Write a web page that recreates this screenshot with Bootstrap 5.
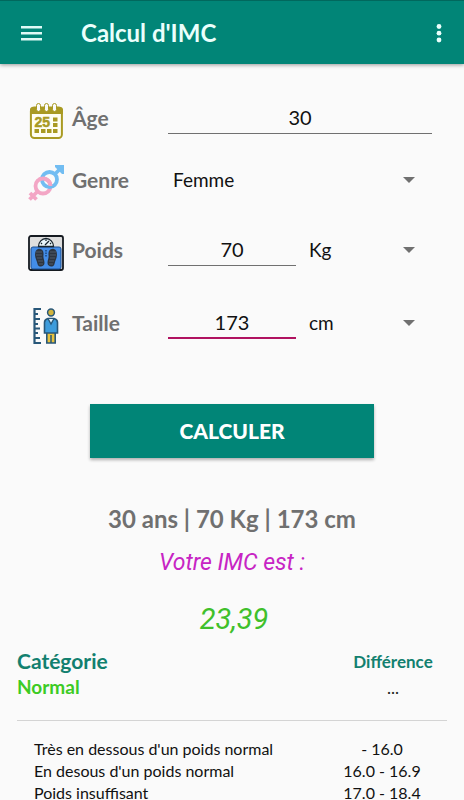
<!DOCTYPE html>
<html lang="fr">
<head>
<meta charset="utf-8">
<meta name="viewport" content="width=device-width, initial-scale=1">
<title>Calcul d'IMC</title>
<link href="https://cdn.jsdelivr.net/npm/bootstrap@5.3.0/dist/css/bootstrap.min.css" rel="stylesheet">
<style>
body { font-family: Lato, "Noto Sans", sans-serif; background: #fafafa; color: #212121; }
.app-bar { background: #018577; height: 64px; padding: 0 16px 0 20px; border-top: 1px solid #01685d; box-shadow: 0 1px 4px rgba(0,0,0,.4); }
.app-title { font-size: 24px; font-weight: 700; line-height: 32px; margin-left: 38px; color: #eafffc; }
.bar-btn { line-height: 0; }
.form-area { padding: 34px 32px 0 28px; }
.line { display: flex; align-items: flex-start; margin-bottom: 32px; }
.line-tight { margin-bottom: 21px; }
.line-mid { margin-bottom: 29px; }
.line-icon { width: 36px; height: 36px; margin: 5px 8px 0 0; flex: none; }
.line-label { width: 96px; flex: none; font-size: 21px; font-weight: 700; line-height: 40px; color: #707070; }
.entry { height: 36px; padding: 3px 0 0; border: 0; border-bottom: 1px solid #707070; border-radius: 0; background: transparent; text-align: center; font-size: 20px; color: #111; min-width: 0; outline: 0; }
.entry-active { border-bottom: 2px solid #b01260; }
.picker { appearance: none; border: 0; border-radius: 0; height: 40px; padding: 0 32px 0 5px; font-size: 19px; color: #111; min-width: 0;
  background: transparent url("data:image/svg+xml,%3Csvg xmlns='http://www.w3.org/2000/svg' viewBox='0 0 12 6'%3E%3Cpath d='M0 0h12L6 6z' fill='%23707070'/%3E%3C/svg%3E") no-repeat right 17px center / 12px 6px; }
.picker-unit { padding-left: 9px; }
.calc-btn { background: #018577; color: #fff; width: 61%; height: 54px; border-radius: 0; font-size: 21px; font-weight: 900; box-shadow: 0 2px 3px rgba(0,0,0,.3); margin-top: 28px; }
.calc-btn:hover { background: #01786b; color: #fff; }
.summary { font-size: 24px; font-weight: 700; line-height: 32px; color: #707070; margin-top: 45px; }
.imc-label { font: italic 400 23px/32px Roboto, sans-serif; color: #c724c4; margin-top: 12px; }
.imc-value { font: italic 400 29px/40px Roboto, sans-serif; color: #3fc02b; margin-top: 20px; padding-left: 4px; }
.result { margin: 9px 17px 0; padding-bottom: 20px; border-bottom: 1px solid #d4d4d4; }
.teal { color: #12806f; }
.head-text { font-size: 21px; font-weight: 700; line-height: 26px; }
.head-value { font-size: 19px; font-weight: 700; line-height: 26px; }
.head-small { font-size: 17px; font-weight: 700; line-height: 26px; }
.green { color: #3ccb24; }
.diff-col { width: 108px; padding-top: 1px; margin-bottom: -1px; }
.ranges { margin: 17px 17px 0; font-size: 16px; line-height: 22px; color: #111; }
.ranges th { padding: 0 0 0 17px; font-weight: 400; }
.ranges td { padding: 0; width: 130px; text-align: center; }
</style>
</head>
<body>
<div class="vh-100 d-flex flex-column overflow-hidden">
<header class="app-bar d-flex align-items-center flex-shrink-0">
  <button class="btn p-0 border-0 bar-btn" type="button" aria-label="Menu">
    <svg width="23" height="18" viewBox="0 0 23 18" fill="#dffaf6"><path d="M1 2h21v2.500H1zM1 8h21v2.500H1zM1 14h21v2.500H1z"/></svg>
  </button>
  <h1 class="app-title mb-0">Calcul d'IMC</h1>
  <button class="btn p-0 border-0 bar-btn ms-auto" type="button" aria-label="Options">
    <svg width="18" height="20" viewBox="0 0 18 20" fill="#eafffc"><circle cx="9" cy="3.500" r="2.400"/><circle cx="9" cy="10.200" r="2.400"/><circle cx="9" cy="17" r="2.400"/></svg>
  </button>
</header>
<main class="flex-shrink-0">
  <form class="form-area">
    <div class="line line-tight">
      <svg class="line-icon" viewBox="0 0 36 36" aria-hidden="true">
        <rect x="2.900" y="4.500" width="31" height="30.500" rx="3.500" fill="#fffef2" stroke="#a99a22" stroke-width="2"/>
        <path d="M2 11V7q0-3 3-3h27q3 0 3 3v4z" fill="#a99a22"/>
        <g fill="#fafafa" stroke="#a99a22"><rect x="8.500" y=".5" width="4" height="8" rx="2"/><rect x="16.500" y=".5" width="4" height="8" rx="2"/><rect x="24.500" y=".5" width="4" height="8" rx="2"/></g>
        <text x="6.500" y="24" font-family="Liberation Sans" font-size="14" font-weight="700" fill="#a99a22" stroke="#a99a22" stroke-width=".5">25</text>
        <path fill="#a99a22" d="M25 14.500h4.500v4H25zM25 20h4.500v4H25zM6.500 26H11v4H6.500zM13 26h4.500v4H13zM19 26h4.500v4H19zM25 26h4.500v4H25z"/>
      </svg>
      <label class="line-label" for="age">Âge</label>
      <input class="entry flex-fill" id="age" type="text" inputmode="numeric" value="30">
    </div>
    <div class="line line-mid">
      <svg class="line-icon" viewBox="0 0 36 36" fill="none" stroke-width="3.800" aria-hidden="true">
        <circle cx="15" cy="21" r="7.500" stroke="#f3a6c5"/><path d="M9.500 26.500L1.500 34.500M2 28l6.500 6.500" stroke="#f3a6c5"/>
        <circle cx="21.500" cy="14.500" r="7.500" stroke="#72bdf2"/><path d="M27 9l5-5" stroke="#72bdf2"/><path d="M27 0h9v9h-2l-7-7z" fill="#72bdf2"/>
        <path d="M11 14.700A7.500 7.500 0 0 1 22.500 21" stroke="#f3a6c5"/>
      </svg>
      <label class="line-label" for="genre">Genre</label>
      <select class="picker flex-fill" id="genre"><option>Femme</option><option>Homme</option></select>
    </div>
    <div class="line">
      <svg class="line-icon" viewBox="0 0 36 36" aria-hidden="true">
        <rect x="1" y="1" width="34" height="34" rx="2" fill="#dedede" stroke="#151a20" stroke-width="1.800"/>
        <rect x="3" y="12" width="30" height="22" rx="2" fill="#438de8" stroke="#1c4f91"/>
        <path d="M10.500 11.500a7.500 8 0 0 1 15 0z" fill="#e9f6fb" stroke="#18242d" stroke-width="1.300"/>
        <path d="M13 8l1 1M18 4.500v1.500M23 8l-1 1M17 10l4-4" stroke="#18242d" stroke-width="1.300"/>
        <path d="M18 15v7" stroke="#245999" stroke-width="2" stroke-dasharray="1.500 1"/>
        <path d="M10 14c4-1 6 2 5.500 6-.5 3 1 5 1 8 0 4-6 5-7 1-.5-3-2.500-6-2.500-9 0-3 1-5.500 3-6zM26 14c-4-1-6 2-5.500 6 .5 3-1 5-1 8 0 4 6 5 7 1 .5-3 2.500-6 2.500-9 0-3-1-5.500-3-6z" fill="#2d3540"/>
        <path d="M8 17h6M8 20h6M9 23h5M10 26h5M11 29h4M28 17h-6M28 20h-6M27 23h-5M26 26h-5M25 29h-4" stroke="#596574" stroke-width=".8"/>
      </svg>
      <label class="line-label" for="poids">Poids</label>
      <div class="row g-0 flex-fill">
        <div class="col-6 d-flex pe-1"><input class="entry w-100" id="poids" type="text" inputmode="numeric" value="70"></div>
        <div class="col-6 d-flex"><select class="picker picker-unit w-100" aria-label="Unité de poids"><option>Kg</option><option>lb</option></select></div>
      </div>
    </div>
    <div class="line">
      <svg class="line-icon" viewBox="0 0 36 36" aria-hidden="true">
        <path d="M13 1H6.500v34H13M6.500 6H10M6.500 11h5.500M6.500 16H10M6.500 20.500h5.500M6.500 25H10M6.500 30h5.500" fill="none" stroke="#285779" stroke-width="2.200"/>
        <circle cx="23" cy="4.500" r="3.400" fill="#d2b43d" stroke="#285779" stroke-width="1.500"/>
        <path d="M18.800 24h8.400v11h-8.400z" fill="#e8c23c" stroke="#285779" stroke-width="1.600"/><path d="M23 27v8" stroke="#285779" stroke-width="1.500"/>
        <path d="M20 10.500h6q3.500 1 3.500 4V25h-13V14.500q0-3 3.500-4z" fill="#3d9cdc" stroke="#285779" stroke-width="1.600"/>
        <path d="M20.200 11l2.800 5 2.800-5" fill="#e4f3fb" stroke="#285779" stroke-width="1.400"/>
      </svg>
      <label class="line-label" for="taille">Taille</label>
      <div class="row g-0 flex-fill">
        <div class="col-6 d-flex pe-1"><input class="entry entry-active w-100" id="taille" type="text" inputmode="numeric" value="173"></div>
        <div class="col-6 d-flex"><select class="picker picker-unit w-100" aria-label="Unité de taille"><option>cm</option><option>in</option></select></div>
      </div>
    </div>
  </form>
  <div class="text-center">
    <button class="btn calc-btn" type="button">CALCULER</button>
    <p class="summary mb-0">30 ans | 70 Kg | 173 cm</p>
    <p class="imc-label mb-0">Votre IMC est :</p>
    <p class="imc-value mb-0">23,39</p>
  </div>
  <section class="result d-flex justify-content-between">
    <div><div class="head-text teal">Catégorie</div><div class="head-value green">Normal</div></div>
    <div class="diff-col text-center"><div class="head-small teal">Différence</div><div class="head-small fw-normal">...</div></div>
  </section>
  <div class="d-flex flex-column">
  <table class="ranges">
    <tbody>
      <tr><th scope="row">Très en dessous d'un poids normal</th><td>- 16.0</td></tr>
      <tr><th scope="row">En desous d'un poids normal</th><td>16.0 - 16.9</td></tr>
      <tr><th scope="row">Poids insuffisant</th><td>17.0 - 18.4</td></tr>
    </tbody>
  </table>
  </div>
</main>
</div>
<script src="https://cdn.jsdelivr.net/npm/bootstrap@5.3.0/dist/js/bootstrap.bundle.min.js"></script>
</body>
</html>
